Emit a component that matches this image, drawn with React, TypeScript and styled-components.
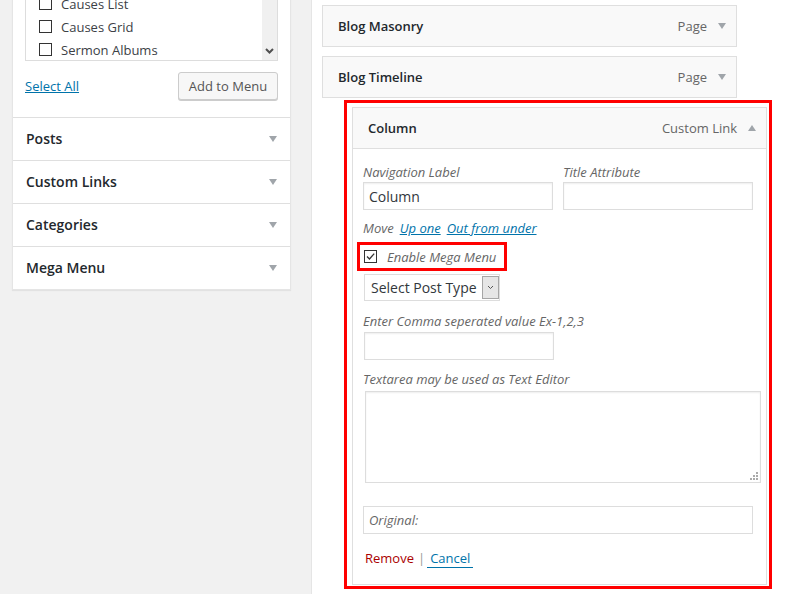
import React from "react";
import styled, { createGlobalStyle } from "styled-components";

const Global = createGlobalStyle`
  html, body { margin: 0; padding: 0; background: #f1f1f1; }
  body {
    font-family: "Open Sans", "Noto Sans", sans-serif;
    font-size: 13px;
    color: #444;
    overflow: hidden;
  }
  * { box-sizing: border-box; }
`;

const Page = styled.div`
  display: flex;
  align-items: flex-start;
  height: 594px;
  overflow: hidden;
`;

/* ---------- left sidebar ---------- */

const Sidebar = styled.div`
  flex: none;
  width: 279px;
  margin: -30px 20px 0 12px;
  background: #fff;
  border: 1px solid #e5e5e5;
  box-shadow: 0 1px 1px rgba(0, 0, 0, 0.06);
`;

const TopSection = styled.div`
  padding: 9px 11px 17px 12px;
`;

const ListBox = styled.div`
  width: 253px;
  height: 81px;
  border: 1px solid #dddddd;
  display: flex;
  overflow: hidden;
  background: #fff;
`;

const ListItems = styled.div`
  flex: 1;
  padding: 11px 0 0 13px;
`;

const ListRow = styled.div`
  height: 23px;
  display: flex;
  align-items: center;
  gap: 9px;
  color: #3c4146;
  font-size: 13px;
`;

const Box = styled.span`
  flex: none;
  width: 13px;
  height: 13px;
  border: 1px solid #333;
  background: #fff;
  display: inline-flex;
  align-items: center;
  justify-content: center;
`;

const ScrollTrack = styled.div`
  flex: none;
  width: 15px;
  background: #f0f0f0;
  display: flex;
  align-items: flex-end;
  justify-content: center;
  padding-bottom: 6px;
`;

const ActionRow = styled.div`
  width: 253px;
  margin-top: 11px;
  display: flex;
  align-items: center;
  justify-content: space-between;
`;

const LinkText = styled.a`
  color: #0073aa;
  text-decoration: underline;
  font-size: 13px;
  cursor: pointer;
`;

const Button = styled.button`
  width: 100px;
  height: 28px;
  padding: 0;
  white-space: nowrap;
  border: 1px solid #cccccc;
  border-radius: 3px;
  background: #f7f7f7;
  box-shadow: 0 1px 0 #cccccc;
  color: #555;
  font-family: "Open Sans", "Noto Sans", sans-serif;
  font-size: 13px;
`;

const Accordion = styled.div`
  height: 43px;
  border-top: 1px solid #dfdfdf;
  display: flex;
  align-items: center;
  justify-content: space-between;
  padding: 0 13px 1px 13px;
`;

const AccordionTitle = styled.span`
  font-size: 14px;
  font-weight: 600;
  color: #23282d;
`;

const Triangle = styled.span<{ $up?: boolean }>`
  flex: none;
  width: 0;
  height: 0;
  border-left: 4.5px solid transparent;
  border-right: 4.5px solid transparent;
  ${(p) =>
    p.$up
      ? "border-bottom: 6px solid #a0a5aa;"
      : "border-top: 6px solid #a0a5aa;"}
`;

/* ---------- main area ---------- */

const Main = styled.div`
  flex: 1;
  align-self: stretch;
  background: #fff;
  border-left: 1px solid #e5e5e5;
  padding: 5px 0 0 10px;
  display: flex;
  flex-direction: column;
  align-items: flex-start;
`;

const MenuBar = styled.div`
  width: 415px;
  height: 42px;
  border: 1px solid #dfdfdf;
  background: #f9f9f9;
  display: flex;
  align-items: center;
  padding: 0 10px 0 15px;
  & + & {
    margin-top: 9px;
  }
`;

const BarTitle = styled.span`
  flex: 1;
  font-size: 13px;
  font-weight: 600;
  color: #23282d;
`;

const BarType = styled.span`
  font-size: 13px;
  color: #666;
  margin-right: 11px;
`;

const Highlight = styled.div`
  margin: 2px 0 0 22px;
  border: 3px solid #ff0000;
  padding: 4px 2px 1px 5px;
`;

const OpenItem = styled.div`
  width: 415px;
`;

const OpenBody = styled.div`
  border: 1px solid #dfdfdf;
  border-top: none;
  background: #fff;
  padding: 14px 10px 16px 10px;
`;

const FieldRow = styled.div`
  display: flex;
  gap: 10px;
`;

const Field = styled.div`
  display: flex;
  flex-direction: column;
  width: 190px;
`;

const Label = styled.div<{ $mt?: number; $mb?: number }>`
  font-style: italic;
  font-size: 13px;
  line-height: 18px;
  color: #666;
  margin-top: ${(p) => p.$mt ?? 0}px;
  margin-bottom: ${(p) => p.$mb ?? 1}px;
`;

const TextInput = styled.input<{ $w?: number; $ml?: number }>`
  display: block;
  width: ${(p) => p.$w ?? 190}px;
  height: 28px;
  margin-left: ${(p) => p.$ml ?? 0}px;
  border: 1px solid #dddddd;
  box-shadow: inset 0 1px 2px rgba(0, 0, 0, 0.07);
  padding: 0 5px;
  font-family: "Open Sans", "Noto Sans", sans-serif;
  font-size: 14px;
  color: #32373c;
  background: #fff;
  outline: none;
`;

const MoveRow = styled.div`
  margin-top: 9px;
  font-style: italic;
  font-size: 13px;
  line-height: 18px;
  color: #666;
`;

const MoveLink = styled.a`
  margin-left: 6px;
  color: #0073aa;
  text-decoration: underline;
`;

const MegaBox = styled.div`
  margin: 5px 0 0 -6px;
  width: 150px;
  height: 29px;
  border: 3px solid #ff0000;
  display: flex;
  align-items: center;
  gap: 10px;
  padding-left: 4px;
`;

const MegaText = styled.span`
  font-style: italic;
  font-size: 13px;
  color: #666;
`;

const SelectBox = styled.div`
  margin: 3px 0 0 1px;
  width: 136px;
  height: 27px;
  border: 1px solid #dddddd;
  display: flex;
  background: #fff;
`;

const SelectText = styled.span`
  flex: 1;
  padding-left: 6px;
  font-size: 14px;
  line-height: 25px;
  color: #32373c;
  white-space: nowrap;
  overflow: hidden;
`;

const SelectButton = styled.span`
  flex: none;
  width: 17px;
  margin: 1px 0 1px 0;
  border: 1px solid #a6a6a6;
  background: #e6e6e6;
  display: flex;
  align-items: center;
  justify-content: center;
`;

const AreaWrap = styled.div`
  position: relative;
  margin-left: 2px;
  width: 396px;
  height: 92px;
`;

const TextArea = styled.textarea`
  display: block;
  width: 100%;
  height: 100%;
  border: 1px solid #dddddd;
  box-shadow: inset 0 1px 2px rgba(0, 0, 0, 0.07);
  resize: none;
  outline: none;
  background: #fff;
`;

const Grip = styled.svg`
  position: absolute;
  right: 3px;
  bottom: 3px;
`;

const OriginalBox = styled.div`
  margin-top: 23px;
  width: 390px;
  height: 28px;
  border: 1px solid #dddddd;
  padding-left: 5px;
  font-style: italic;
  font-size: 13px;
  line-height: 26px;
  color: #666;
`;

const Actions = styled.div`
  margin-top: 15px;
  padding-left: 2px;
  font-size: 13px;
  line-height: 18px;
  display: flex;
  align-items: flex-start;
`;

const Remove = styled.a`
  color: #a00;
`;

const Sep = styled.span`
  color: #999;
  margin: 0 2px 0 4px;
`;

const Cancel = styled.a`
  display: inline-block;
  color: #0073aa;
  padding: 0 3px;
  border-bottom: 1px solid #0073aa;
`;

const Check = () => (
  <svg width="11" height="11" viewBox="0 0 11 11">
    <path d="M2 5.5 L4.5 8 L9.2 2.6" fill="none" stroke="#333" strokeWidth="1.3" />
  </svg>
);

const App: React.FC = () => {
  const listItems = ["Causes List", "Causes Grid", "Sermon Albums"];
  const sections = ["Posts", "Custom Links", "Categories", "Mega Menu"];
  return (
    <>
      <Global />
      <Page>
        <Sidebar>
          <TopSection>
            <ListBox>
              <ListItems>
                {listItems.map((t) => (
                  <ListRow key={t}>
                    <Box />
                    <span>{t}</span>
                  </ListRow>
                ))}
              </ListItems>
              <ScrollTrack>
                <svg width="9" height="6" viewBox="0 0 9 6">
                  <path d="M1 1 L4.5 4.5 L8 1" fill="none" stroke="#505050" strokeWidth="2" />
                </svg>
              </ScrollTrack>
            </ListBox>
            <ActionRow>
              <LinkText>Select All</LinkText>
              <Button>Add to Menu</Button>
            </ActionRow>
          </TopSection>
          {sections.map((s) => (
            <Accordion key={s}>
              <AccordionTitle>{s}</AccordionTitle>
              <Triangle />
            </Accordion>
          ))}
        </Sidebar>

        <Main>
          <MenuBar>
            <BarTitle>Blog Masonry</BarTitle>
            <BarType>Page</BarType>
            <Triangle />
          </MenuBar>
          <MenuBar>
            <BarTitle>Blog Timeline</BarTitle>
            <BarType>Page</BarType>
            <Triangle />
          </MenuBar>

          <Highlight>
            <OpenItem>
              <MenuBar>
                <BarTitle>Column</BarTitle>
                <BarType>Custom Link</BarType>
                <Triangle $up />
              </MenuBar>
              <OpenBody>
                <FieldRow>
                  <Field>
                    <Label>Navigation Label</Label>
                    <TextInput readOnly value="Column" />
                  </Field>
                  <Field>
                    <Label>Title Attribute</Label>
                    <TextInput readOnly value="" />
                  </Field>
                </FieldRow>
                <MoveRow>
                  Move
                  <MoveLink>Up one</MoveLink>
                  <MoveLink>Out from under</MoveLink>
                </MoveRow>
                <MegaBox>
                  <Box>
                    <Check />
                  </Box>
                  <MegaText>Enable Mega Menu</MegaText>
                </MegaBox>
                <SelectBox>
                  <SelectText>Select Post Type</SelectText>
                  <SelectButton>
                    <svg width="7" height="5" viewBox="0 0 7 5">
                      <path d="M1 1 L3.5 3.5 L6 1" fill="none" stroke="#555" strokeWidth="1" />
                    </svg>
                  </SelectButton>
                </SelectBox>
                <Label $mt={11} $mb={2}>
                  Enter Comma seperated value Ex-1,2,3
                </Label>
                <TextInput readOnly value="" $ml={1} />
                <Label $mt={10} $mb={3}>
                  Textarea may be used as Text Editor
                </Label>
                <AreaWrap>
                  <TextArea readOnly />
                  <Grip width="8" height="8" viewBox="0 0 8 8">
                    <rect x="6" y="0" width="2" height="2" fill="#aaa" />
                    <rect x="3" y="3" width="2" height="2" fill="#aaa" />
                    <rect x="6" y="3" width="2" height="2" fill="#aaa" />
                    <rect x="0" y="6" width="2" height="2" fill="#aaa" />
                    <rect x="3" y="6" width="2" height="2" fill="#aaa" />
                    <rect x="6" y="6" width="2" height="2" fill="#aaa" />
                  </Grip>
                </AreaWrap>
                <OriginalBox>Original:</OriginalBox>
                <Actions>
                  <Remove>Remove</Remove>
                  <Sep>|</Sep>
                  <Cancel>Cancel</Cancel>
                </Actions>
              </OpenBody>
            </OpenItem>
          </Highlight>
        </Main>
      </Page>
    </>
  );
};

export default App;
